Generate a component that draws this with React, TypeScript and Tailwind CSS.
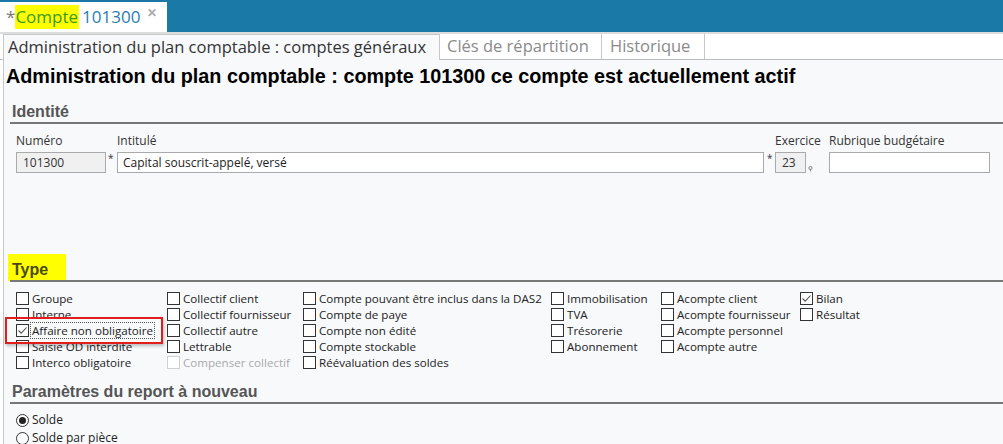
import React from 'react';

const UI = { fontFamily: '"Open Sans", "Noto Sans", sans-serif' };
const ARIAL = { fontFamily: '"Liberation Sans", Arial, sans-serif' };

function Box({ checked, disabled }: { checked?: boolean; disabled?: boolean }) {
  return (
    <span className={`w-[13px] h-[13px] shrink-0 border bg-white flex items-center justify-center ${disabled ? 'border-[#d0d0d0]' : 'border-[#333]'}`}>
      {checked && (
        <svg width="11" height="11" viewBox="0 0 11 11">
          <path d="M1.5 5.5 L4.2 8.2 L9.5 2.5" fill="none" stroke="#555" strokeWidth="1.1" />
        </svg>
      )}
    </span>
  );
}

type Item = { label: string; checked?: boolean; disabled?: boolean; focus?: boolean };

function Check({ item }: { item: Item }) {
  return (
    <div className="flex items-center gap-[2px] h-[16px] whitespace-nowrap">
      <Box checked={item.checked} disabled={item.disabled} />
      <span className={`text-[11.6px] leading-[15px] px-[1px] ${item.disabled ? 'text-[#aaa]' : 'text-[#222]'} ${item.focus ? 'outline outline-1 outline-dotted outline-[#555]' : ''}`}>
        {item.label}
      </span>
    </div>
  );
}

const COLS: { w: string; items: Item[] }[] = [
  { w: 'w-[151px]', items: [
    { label: 'Groupe' }, { label: 'Interne' }, { label: 'Affaire non obligatoire', checked: true, focus: true },
    { label: 'Saisie OD interdite' }, { label: 'Interco obligatoire' },
  ] },
  { w: 'w-[136px]', items: [
    { label: 'Collectif client' }, { label: 'Collectif fournisseur' }, { label: 'Collectif autre' },
    { label: 'Lettrable' }, { label: 'Compenser collectif', disabled: true },
  ] },
  { w: 'w-[248px]', items: [
    { label: 'Compte pouvant être inclus dans la DAS2' }, { label: 'Compte de paye' }, { label: 'Compte non édité' },
    { label: 'Compte stockable' }, { label: 'Réévaluation des soldes' },
  ] },
  { w: 'w-[110px]', items: [
    { label: 'Immobilisation' }, { label: 'TVA' }, { label: 'Trésorerie' }, { label: 'Abonnement' },
  ] },
  { w: 'w-[139px]', items: [
    { label: 'Acompte client' }, { label: 'Acompte fournisseur' }, { label: 'Acompte personnel' }, { label: 'Acompte autre' },
  ] },
  { w: 'w-[100px]', items: [{ label: 'Bilan', checked: true }, { label: 'Résultat' }] },
];

function Heading({ children }: { children: React.ReactNode }) {
  return (
    <div className="border-b-2 border-[#777] ml-[6px]">
      <h2 className="text-[16px] font-bold text-[#555] leading-[20px] pl-[2px]" style={ARIAL}>
        {children}
      </h2>
    </div>
  );
}

export default function App() {
  return (
    <div className="w-[1003px] h-[444px] overflow-hidden bg-white flex flex-col" style={UI}>
      {/* document tab bar */}
      <div className="flex h-[32px] bg-[#1b79a8] shrink-0">
        <div className="w-[167px] mt-[2px] bg-white flex items-center pl-[6px] text-[17px] leading-[24px]">
          <span className="text-[#777]">*</span>
          <span className="bg-[#ffff00] text-[#3c9a1c] pr-[1px]">Compte</span>
          <span className="text-[#2a7cb3] ml-[3px]">101300</span>
          <span className="text-[#aaa] text-[12px] font-bold ml-[7px] -mt-[8px]">✕</span>
        </div>
      </div>
      <div className="h-[2px] bg-[#dcdcdc] shrink-0" />

      {/* view tabs */}
      <div className="flex h-[26px] bg-white border-b border-[#bcbcbc] pl-[3px] shrink-0 text-[16.5px] leading-[24px]">
        <div className="border border-[#c8c8c8] border-b-0 bg-[#f8f9fb] px-[4px] -mb-[1px] text-[#333] w-[437px] whitespace-nowrap">
          Administration du plan comptable : comptes généraux
        </div>
        <div className="border-r border-[#c8c8c8] px-[7px] text-[#8a8a8a] w-[162px] whitespace-nowrap">Clés de répartition</div>
        <div className="border-r border-[#c8c8c8] px-[8px] text-[#8a8a8a] w-[103px]">Historique</div>
      </div>

      {/* content */}
      <div className="flex-1 ml-[3px] border-l border-[#c8c8c8] bg-[#f8f9fb] relative">
        <h1 className="text-[19.8px] font-bold text-black leading-[24px] mt-[4px] ml-[2px] whitespace-nowrap" style={ARIAL}>
          Administration du plan comptable : compte 101300 ce compte est actuellement actif
        </h1>

        <div className="mt-[14px]">
          <Heading>Identité</Heading>
        </div>

        <div className="flex mt-[9px] ml-[12px] text-[12px] text-[#333]">
          <div className="flex flex-col">
            <span className="leading-[16px]">Numéro</span>
            <div className="flex">
              <div className="w-[90px] h-[21px] mt-[3px] border border-[#aaa] bg-[#f0f0f0] pl-[6px] leading-[19px]">101300</div>
              <span className="w-[11px] text-[10px] leading-[14px] mt-[2px] pl-[2px]">*</span>
            </div>
          </div>
          <div className="flex flex-col">
            <span className="leading-[16px]">Intitulé</span>
            <div className="flex">
              <div className="w-[647px] h-[21px] mt-[3px] border border-[#aaa] bg-white pl-[5px] leading-[19px] text-[#222]">Capital souscrit-appelé, versé</div>
              <span className="w-[11px] text-[10px] leading-[14px] mt-[2px] pl-[3px]">*</span>
            </div>
          </div>
          <div className="flex flex-col">
            <span className="leading-[16px]">Exercice</span>
            <div className="flex">
              <div className="w-[31px] h-[21px] mt-[3px] border border-[#aaa] bg-[#f0f0f0] pl-[6px] leading-[19px]">23</div>
              <svg width="23" height="24" viewBox="0 0 23 24" className="shrink-0">
                <circle cx="4.5" cy="19" r="1.6" fill="none" stroke="#777" strokeWidth="0.9" />
                <line x1="4.5" y1="20.5" x2="4.5" y2="22.5" stroke="#777" strokeWidth="0.9" />
              </svg>
            </div>
          </div>
          <div className="flex flex-col">
            <span className="leading-[16px]">Rubrique budgétaire</span>
            <div className="w-[161px] h-[21px] mt-[3px] border border-[#aaa] bg-white" />
          </div>
        </div>

        <div className="mt-[87px] relative">
          <div className="absolute left-[4px] -top-[6px] w-[58px] h-[27px] bg-[#ffff00]" />
          <div className="relative">
            <div className="border-b-2 border-[#777] ml-[6px]">
              <h2 className="text-[16px] font-bold text-[#4a4a10] leading-[20px] pl-[2px]" style={ARIAL}>
                Type
              </h2>
            </div>
          </div>
        </div>

        <div className="flex mt-[8px] ml-[12px]">
          {COLS.map((c, i) => (
            <div key={i} className={`${c.w} flex flex-col`}>
              {c.items.map(it => <Check key={it.label} item={it} />)}
            </div>
          ))}
        </div>

        {/* red highlight box */}
        <div className="absolute left-[1px] top-[257px] w-[158px] h-[27px] border-2 border-[#e31c1c] shadow-[1px_2px_3px_rgba(0,0,0,0.25)]" />

        <div className="mt-[12px]">
          <Heading>Paramètres du report à nouveau</Heading>
        </div>

        <div className="flex flex-col ml-[12px] mt-[7px] text-[12px] text-[#222]">
          <div className="flex items-center gap-[3px] h-[18px]">
            <span className="w-[13px] h-[13px] rounded-full border border-[#333] bg-white flex items-center justify-center">
              <span className="w-[7px] h-[7px] rounded-full bg-[#222]" />
            </span>
            <span>Solde</span>
          </div>
          <div className="flex items-center gap-[3px] h-[18px]">
            <span className="w-[13px] h-[13px] rounded-full border border-[#333] bg-white" />
            <span>Solde par pièce</span>
          </div>
        </div>
      </div>
    </div>
  );
}
